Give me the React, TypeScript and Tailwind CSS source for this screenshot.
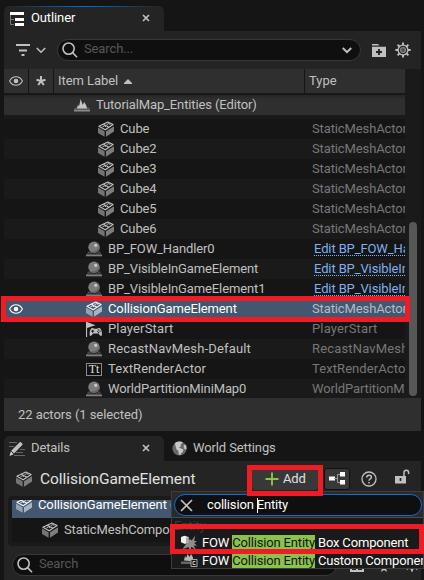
import type { ReactNode } from "react";

function CubeIcon({ bright = false }: { bright?: boolean }) {
  const side = bright ? "#a9b4c2" : "#7d7d7d";
  const front = bright ? "#97a3b3" : "#747474";
  const line = bright ? "#f4f6f8" : "#c0c0c0";
  const hole = bright ? "#435770" : "#1a1a1a";
  return (
    <svg width="16" height="16" viewBox="0 0 16 16" className="block shrink-0">
      <path d="M0 6.600 6.600 10.200V15.800L0 12z" fill={front} />
      <path d="M8 10.200 16 5.200v5.300L8 15.800z" fill={side} />
      <path d="M.9 5.300 9.800 1l5.300 2.500L7.200 8.800z" fill={hole} stroke={line} strokeWidth="1.200" strokeLinejoin="round" />
      <path d="m5.300 3.200 5.700 3" fill="none" stroke={line} strokeWidth="1.200" />
      <path d="m4.500 5.800 2-1 1.500.8M8.700 3.600l2-1 1.600.8" fill="none" stroke={line} strokeWidth="1" />
    </svg>
  );
}

function SphereIcon() {
  return (
    <svg width="16" height="16" viewBox="0 0 16 16" className="block shrink-0">
      <path d="M2.200 10.200.9 12.800h14.200l-1.300-2.600-1.600.7c-2 2-6.400 2-8.400 0z" fill="#484848" />
      <path d="M0 13.400h16V15.300H0z" fill="#7d7d7d" />
      <circle cx="8" cy="6.300" r="5.700" fill="#7c7c7c" />
      <path d="M4 10.400a5.700 5.700 0 0 0 9.500-5.500C12.600 8.500 8.500 11 4 10.400z" fill="#646464" />
      <circle cx="9.700" cy="4.300" r="1.600" fill="#c9c9c9" />
    </svg>
  );
}

function EyeIcon({ color }: { color: string }) {
  return (
    <svg width="14" height="10" viewBox="0 0 14 10" className="block">
      <path d="M.6 5C3.500-.6 10.500-.6 13.400 5 10.500 10.600 3.500 10.600.6 5z" fill="none" stroke={color} strokeWidth="1.100" />
      <circle cx="7" cy="5" r="2.300" fill={color} />
    </svg>
  );
}

function LevelIcon() {
  return (
    <svg width="16" height="14" viewBox="0 0 16 14" className="block shrink-0">
      <path d="M1 9.500.6 11h14.800L15 9.500z" fill="#5a5a5a" />
      <path d="M0 11.500h16V13.500H0z" fill="#8a8a8a" />
      <path d="M3 10.500 4 6.500l1 2L6.700 1l2 6 1.500-3 1.800 3 1.200 3.500z" fill="#c4c4c4" />
    </svg>
  );
}

function PlayerIcon() {
  return (
    <svg width="16" height="16" viewBox="0 0 16 16" className="block shrink-0">
      <path d="M0 1h1.100v15H0z" fill="#c0c0c0" />
      <path d="m1 1 8.500 3.300L1 7z" fill="#c0c0c0" />
      <path d="M5.500 7.300c1-.5 2 .2 3 .4h2.500c1-.2 2-.900 3-.4 1.500 1 2.300 5 1.800 7-.5 1.200-1.900.7-3.300-1.800H7c-1.400 2.500-2.800 3-3.300 1.800-.4-2 .3-6 1.800-7z" fill="#c0c0c0" />
      <path d="M6.700 8.700v3M5.200 10.200h3" stroke="#151515" strokeWidth="1" />
      <path d="M12.700 8.300v1.200M12.700 11v1.200M11 10.200h1.200M13.500 10.200h1.200" stroke="#151515" strokeWidth="1.100" />
    </svg>
  );
}

function TextIcon() {
  return (
    <span className="flex h-[13px] w-4 shrink-0 items-center justify-center border border-[#8a8a8a] bg-[#111] font-['Liberation_Serif',serif] text-[12px] leading-none tracking-normal text-[#e0e0e0]">
      Tt
    </span>
  );
}

function SearchIcon() {
  return (
    <svg width="16" height="16" viewBox="0 0 16 16" className="block shrink-0" fill="none" stroke="#c0c0c0" strokeWidth="1.600">
      <circle cx="6.600" cy="6.600" r="5.600" />
      <path d="m10.600 10.600 4.400 4.600" />
    </svg>
  );
}

function Chevron({ bold = false }: { bold?: boolean }) {
  return (
    <svg width="10" height="7" viewBox="0 0 10 7" className="block shrink-0">
      <path d="m.8 1 4.200 4.200L9.200 1" fill="none" stroke="#c0c0c0" strokeWidth={bold ? 2 : 1.600} />
    </svg>
  );
}

function CloseIcon() {
  return (
    <svg width="8" height="8" viewBox="0 0 8 8" className="block shrink-0">
      <path d="m1 1 6 6M7 1 1 7" stroke="#c0c0c0" strokeWidth="1.700" />
    </svg>
  );
}

function GearIcon() {
  return (
    <svg width="16" height="16" viewBox="0 0 16 16" className="block shrink-0">
      <g stroke="#c0c0c0" strokeWidth="1.900">
        <path d="M8 .4v3M8 12.600v3M.4 8h3M12.600 8h3M2.600 2.600l2.200 2.200M11.200 11.200l2.200 2.200M13.400 2.600l-2.200 2.200M4.800 11.200l-2.200 2.200" />
      </g>
      <circle cx="8" cy="8" r="4.900" fill="#242424" stroke="#c0c0c0" strokeWidth="1.300" />
      <circle cx="8" cy="8" r="2.500" fill="#555" stroke="#858585" strokeWidth="1.200" />
    </svg>
  );
}

function OutlinerIcon() {
  return (
    <svg width="14" height="14" viewBox="0 0 14 14" className="block shrink-0">
      <path d="M0 0h14v3H0zM5 6h9v3H5zM5 11h9v3H5z" fill="#fff" />
      <path d="M.5 3v9.500H4M.5 7.500H4" fill="none" stroke="#777" />
    </svg>
  );
}

function DetailsIcon() {
  return (
    <svg width="16" height="16" viewBox="0 0 16 16" className="block shrink-0">
      <path d="M0 1.500h8M0 5.500h5M11 8.500h5M7 11.500h7M5 14.500h11" stroke="#666" strokeWidth="1" />
      <path d="m2.200 9.700 8.500-8.500c.7-.7 3.500 1.800 2.800 2.600L5 12.500z" fill="#c0c0c0" />
      <path d="m1.800 10.500 2.700 2.700-4 1.800z" fill="#d8d8d8" />
    </svg>
  );
}

function GlobeIcon() {
  return (
    <svg width="15" height="15" viewBox="0 0 15 15" className="block shrink-0">
      <circle cx="7.500" cy="7.500" r="7.100" fill="#686868" />
      <path d="M3 2C5 .5 9 .2 10.700 1.200L9.500 3l-1 .3L9 5.300 7 6.500l2 1 2.500 1-.8 2.500-1.700 1.200L8.500 14 6.700 13.500 6.500 10 4.300 8 3.500 5z" fill="#c8c8c8" />
      <path d="m11.800 4 2.300-.3.500 4-1.200 1-1.600-1.700z" fill="#c0c0c0" />
    </svg>
  );
}

function StarIcon() {
  return (
    <svg width="10" height="10" viewBox="0 0 10 10" className="block">
      <path d="M5 0v5M.5 3.700 5 5M9.500 3.700 5 5M2.200 9 5 5l2.800 4" fill="none" stroke="#c0c0c0" strokeWidth="2" />
    </svg>
  );
}

function BurstIcon() {
  return (
    <svg width="16" height="16" viewBox="0 0 16 16" className="block shrink-0">
      <path d="m9 4 1.700 1.600L14.300.5l-1.200 5.300 2.900.4-2.700 1.900 2.600 2.700-3.300-.4L15 15l-4.600-3.300-1.200 4L7.500 12 1.500 14.300 5 9z" fill="#8d8d8d" />
      <path d="M0 2 3.500.7 7.500 2v5L4 9 0 7.200z" fill="#f0f0f0" />
      <path d="M5 2.800 7.500 2v5L5 8.400z" fill="#a8a8a8" />
    </svg>
  );
}

function LevelClassIcon() {
  return (
    <svg width="17" height="14" viewBox="0 0 17 14" className="block shrink-0">
      <path d="M0 7.500h10V10H0z" fill="#666" />
      <path d="M3 6.500 4 2l1.200 2L6.500 0l2 3L10 0l2 3.500V5L9 7z" fill="#b8b8b8" />
      <path d="M10 5.500h6v7h-6z" fill="#161616" stroke="#a8a8a8" />
      <path d="M14.500 7.500h-2.500v3h2.500" fill="none" stroke="#c8c8c8" />
    </svg>
  );
}

type Row = { label: string; type: string; icon: ReactNode; nested?: boolean; link?: boolean; selected?: boolean; tracking?: string };

const rows: Row[] = [
  { label: "Cube", type: "StaticMeshActor", icon: <CubeIcon />, nested: true },
  { label: "Cube2", type: "StaticMeshActor", icon: <CubeIcon />, nested: true },
  { label: "Cube3", type: "StaticMeshActor", icon: <CubeIcon />, nested: true },
  { label: "Cube4", type: "StaticMeshActor", icon: <CubeIcon />, nested: true },
  { label: "Cube5", type: "StaticMeshActor", icon: <CubeIcon />, nested: true },
  { label: "Cube6", type: "StaticMeshActor", icon: <CubeIcon />, nested: true },
  { label: "BP_FOW_Handler0", type: "Edit BP_FOW_Handler", icon: <SphereIcon />, link: true },
  { label: "BP_VisibleInGameElement", type: "Edit BP_VisibleInGameElement", icon: <SphereIcon />, link: true },
  { label: "BP_VisibleInGameElement1", type: "Edit BP_VisibleInGameElement", icon: <SphereIcon />, link: true },
  { label: "CollisionGameElement", type: "StaticMeshActor", icon: <CubeIcon bright />, selected: true },
  { label: "PlayerStart", type: "PlayerStart", icon: <PlayerIcon />, tracking: "tracking-[0.160px]" },
  { label: "RecastNavMesh-Default", type: "RecastNavMesh", icon: <SphereIcon />, tracking: "tracking-[0.160px]" },
  { label: "TextRenderActor", type: "TextRenderActor", icon: <TextIcon />, tracking: "tracking-[0.080px]" },
  { label: "WorldPartitionMiniMap0", type: "WorldPartitionM", icon: <SphereIcon /> },
];

function OutlinerRow({ row, odd }: { row: Row; odd: boolean }) {
  const bg = row.selected ? "bg-[#435770]" : odd ? "bg-[#1a1a1a]" : "bg-[#151515]";
  return (
    <div className={`flex h-5 shrink-0 items-center overflow-hidden ${bg} ${row.tracking ?? ""}`}>
      <div className="flex w-6 shrink-0 justify-center">{row.selected && <EyeIcon color="#fff" />}</div>
      <div className={`flex w-[284px] shrink-0 items-center gap-1.5 ${row.nested ? "pl-[70px]" : "pl-[58px]"}`}>
        {row.icon}
        <span className={row.selected ? "text-white" : ""}>{row.label}</span>
      </div>
      <div className={`h-5 overflow-hidden ${row.link ? "pl-0.5 text-[#80b0f0]" : row.selected ? "text-[#b4bcc8]" : "text-[#777]"}`}>
        <span className={`block h-[17px] leading-5 ${row.link ? "border-b border-dotted border-[#80b0f0]" : ""}`}>{row.type}</span>
      </div>
    </div>
  );
}

function Outliner() {
  return (
    <section className="h-[431px] shrink-0 pt-1.5">
      <div className="flex h-[25px] w-40 items-center rounded-t-[5px] bg-[#242424] pl-1.5 text-white">
        <OutlinerIcon />
        <span className="ml-[7px] flex-1 pb-px">Outliner</span>
        <span className="mr-3.5 pb-0.5"><CloseIcon /></span>
      </div>
      <div className="flex h-[38px] items-center bg-[#242424] pl-3">
        <svg width="14" height="12" viewBox="0 0 14 12" className="block">
          <path d="M0 1h14M3 6.500h8M5.500 11h3" stroke="#c0c0c0" strokeWidth="1.800" />
        </svg>
        <span className="ml-1.5"><Chevron /></span>
        <div className="ml-[11px] flex h-[22px] w-[304px] items-center rounded-full border border-[#383838] bg-[#0f0f0f] pr-2 pl-1">
          <SearchIcon />
          <span className="ml-1.5 flex-1 pb-0.5 text-[#575757]">Search...</span>
          <Chevron bold />
        </div>
        <svg width="14" height="13" viewBox="0 0 14 13" className="ml-[11px] block">
          <path d="M0 0h6l1.500 1.500H0zM0 2.700h14V13H0z" fill="#c0c0c0" />
          <path d="M7 5v6M4 8h6" stroke="#242424" strokeWidth="1.900" />
        </svg>
        <span className="ml-[9px]"><GearIcon /></span>
      </div>
      <div className="flex h-[329px]">
        <div className="flex w-[401px] flex-col overflow-hidden bg-[#1a1a1a] whitespace-nowrap">
          <div className="flex h-6 shrink-0 gap-px bg-[#151515] *:bg-[#2f2f2f]">
            <div className="flex w-6 items-center justify-center"><EyeIcon color="#c0c0c0" /></div>
            <div className="flex w-6 items-center justify-center"><StarIcon /></div>
            <div className="flex w-[250px] items-center pl-1 tracking-[-0.050px]">
              Item Label
              <svg width="8" height="5" viewBox="0 0 8 5" className="ml-1.5"><path d="M4 0 8 4v1H0V4z" fill="#c0c0c0" /></svg>
            </div>
            <div className="flex flex-1 items-center pl-1 tracking-normal">Type</div>
          </div>
          <div className="h-0.5 shrink-0 bg-[#171717]" />
          <div className="flex h-5 shrink-0 items-center gap-1.5 bg-gradient-to-b from-[#242424] via-[#2f2f2f] via-20% to-[#2f2f2f] pl-[70px]">
            <LevelIcon />
            TutorialMap_Entities (Editor)
          </div>
          <div className="h-1 shrink-0 bg-[#1a1a1a]" />
          {rows.map((row, i) => <OutlinerRow key={i} row={row} odd={i % 2 === 1} />)}
        </div>
        <div className="w-4 bg-[#1a1a1a] px-1 pt-[153px]">
          <div className="h-[174px] rounded-full bg-[#575757]" />
        </div>
      </div>
      <div className="relative flex h-[33px] items-center bg-[#2f2f2f] pl-3.5 tracking-[-0.070px]">22 actors (1 selected)</div>
    </section>
  );
}

function Details() {
  return (
    <section className="flex h-[144px] flex-col">
      <div className="flex h-[25px]">
        <div className="flex w-40 items-center rounded-t-[5px] bg-[#242424] pl-[5px]">
          <DetailsIcon />
          <span className="ml-1.5 flex-1 pb-px">Details</span>
          <span className="mr-3.5 pb-0.5"><CloseIcon /></span>
        </div>
        <div className="flex items-center pl-2">
          <GlobeIcon />
          <span className="ml-[6px] pb-px">World Settings</span>
        </div>
      </div>
      <div className="flex h-[119px] flex-col bg-[#242424]">
        <div className="flex h-[35px] shrink-0 items-center pl-3">
          <CubeIcon />
          <span className="ml-2 w-[212px] shrink-0 text-[15.500px] tracking-[-0.05px] text-[#e0e0e0]">CollisionGameElement</span>
          <div className="flex h-[22px] w-[66px] shrink-0 items-center rounded-[3px] bg-[#383838] pl-[13px]">
            <svg width="14" height="14" viewBox="0 0 14 14"><path d="M7 .5v13M.5 7h13" stroke="#8bc24a" strokeWidth="1.900" /></svg>
            <span className="ml-1 text-[#e0e0e0]">Add</span>
          </div>
          <div className="ml-1.5 flex h-[22px] w-[26px] shrink-0 items-center justify-center rounded-[3px] border border-[#111] bg-[#383838]">
            <svg width="16" height="13" viewBox="0 0 16 13" className="shrink-0">
              <path d="M0 4.500h6v4H0zM11 0h5v4.500h-5zM11 8h5v4.500h-5z" fill="#fff" />
              <path d="M11 2.500H8.500v8H11M5 6.500h3.500" fill="none" stroke="#999" />
            </svg>
          </div>
          <svg width="16" height="16" viewBox="0 0 16 16" className="ml-[11px] shrink-0">
            <circle cx="8" cy="8" r="7" fill="none" stroke="#c0c0c0" strokeWidth="1.300" />
            <path d="M5.700 6.400c0-3 4.700-2.900 4.700-.2C10.400 8 8 7.900 8 9.700M8 11v1.500" fill="none" stroke="#c0c0c0" strokeWidth="1.500" />
          </svg>
          <svg width="15" height="15" viewBox="0 0 15 15" className="mb-1 ml-[18px] shrink-0">
            <path d="M0 7h11v7.500H0z" fill="#c0c0c0" />
            <path d="M9 7V3.500a2.300 2.300 0 0 1 4.600 0V5" fill="none" stroke="#c0c0c0" strokeWidth="1.500" />
            <path d="M5.500 9v3" stroke="#242424" strokeWidth="1.700" />
          </svg>
        </div>
        <div className="mx-1 h-[50px] rounded-[4px] bg-[#1a1a1a] px-1 pt-1">
          <div className="flex h-[18px] items-start overflow-hidden bg-[#435770] pl-1 text-white">
            <div className="-mt-[3px] flex items-center gap-1.5 whitespace-nowrap"><CubeIcon bright /> CollisionGameElement (In</div>
          </div>
          <div className="flex h-6 items-center gap-1.5 bg-[#151515] pl-[30px]"><CubeIcon /> StaticMeshComponent</div>
        </div>
        <div className="mt-2 flex h-[26px] items-start pl-2">
          <div className="flex h-[22px] w-[325px] items-center rounded-full border border-[#383838] bg-[#0f0f0f] pl-1">
            <SearchIcon />
            <span className="ml-1.5 pb-0.5 text-[#575757]">Search</span>
          </div>
          <div className="mt-2 ml-[13px] flex items-center gap-[15px]">
            <svg width="14" height="10"><path d="M1 1h12v8H1zM7 1v8" fill="none" stroke="#c0c0c0" strokeWidth="2" /></svg>
            <svg width="10" height="10"><path d="m5 0 1.500 3.500L10 4 7 6.500 8 10 5 8l-3 2 1-3.500L0 4l3.500-.5z" fill="#c0c0c0" /></svg>
            <span className="-mt-1.5"><GearIcon /></span>
          </div>
        </div>
      </div>
    </section>
  );
}

function Match({ rest }: { rest: string }) {
  return (
    <span className="whitespace-pre">FOW <span className="inline-block h-[15px] bg-[#8bc24a] leading-[15px] text-[#151515]">Collision Entity</span> {rest}</span>
  );
}

function AddMenu() {
  return (
    <div className="absolute top-[491px] left-[171px] h-[78px] w-[253px] overflow-hidden border border-[#3d3d3d] bg-[#1a1a1a] tracking-[-0.170px] text-white">
      <div className="h-[25px] bg-[#2a2a2a] pt-0.5 pl-0.5">
        <div className="flex h-[22px] w-[248px] items-center rounded-full border-[1.500px] border-[#0f6ecd] bg-[#0f0f0f] pl-[5px]">
          <svg width="13" height="13" viewBox="0 0 13 13" className="mr-[14px]"><path d="m1 1 11 11M12 1 1 12" stroke="#c0c0c0" strokeWidth="1.700" /></svg>
          <span className="whitespace-pre">collision </span>
          <span className="h-[15px] w-px bg-white" />
          <span className="-ml-px">Entity</span>
        </div>
      </div>
      <div className="h-[17px] overflow-hidden border-t border-[#4a4a4a] pl-0.5 leading-[16px] text-[#3c3c3c]">Entity</div>
      <div className="flex h-[17px] items-center gap-[5px] pl-[9px] whitespace-nowrap"><BurstIcon /><Match rest="Box Component" /></div>
      <div className="flex h-[17px] items-center gap-1 pt-0.5 pl-[9px] whitespace-nowrap"><LevelClassIcon /><Match rest="Custom Component" /></div>
    </div>
  );
}

export default function App() {
  return (
    <main className="relative h-[580px] w-[424px] overflow-hidden bg-[#151515] pr-[3px] pl-1 font-[Roboto,sans-serif] text-[13px] leading-4 tracking-[-0.120px] text-[#c0c0c0]">
      <div className="absolute top-1.5 left-2 h-px w-[152px] bg-gradient-to-r from-transparent via-[#0070e0] to-transparent" />
      <div className="flex flex-col gap-[5px]">
        <Outliner />
        <Details />
      </div>
      <AddMenu />
      <div className="absolute top-[296px] left-px h-[26px] w-[409px] border-[5px] border-[#ee1c24]" />
      <div className="absolute top-[465px] left-[247px] h-[31px] w-[76px] border-[5px] border-[#ee1c24]" />
      <div className="absolute top-[524px] left-[170px] h-[30px] w-[254px] border-[5px] border-[#ee1c24]" />
    </main>
  );
}
